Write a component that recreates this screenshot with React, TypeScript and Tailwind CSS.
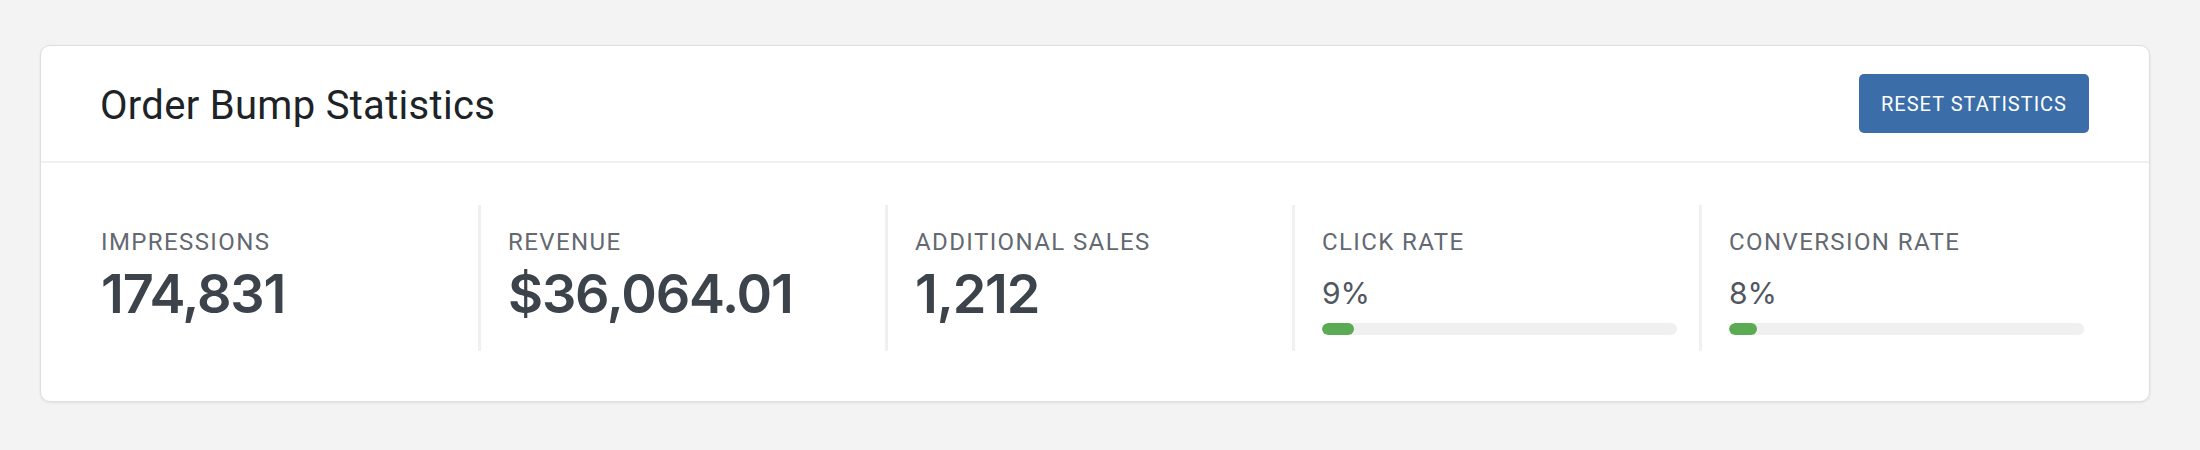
const stats = [
    { label: "IMPRESSIONS", value: "174,831" },
    { label: "REVENUE", value: "$36,064.01" },
    { label: "ADDITIONAL SALES", value: "1,212" },
    { label: "CLICK RATE", rate: 9 },
    { label: "CONVERSION RATE", rate: 8 },
];

function StatColumn({ stat, first }: { stat: any; first: boolean }) {
    return (
        <div
            className={`w-[407px] h-[146px] pt-[23px] pr-[22px] border-l-[3px] pl-[27px] ${
                first ? "border-transparent" : "border-[#f0f0f0]"
            }`}
        >
            <div className="text-[24px] leading-[28px] tracking-[1.4px] text-[#646970]">{stat.label}</div>
            {stat.rate === undefined ? (
                <div className="mt-[11px] font-['Inter',sans-serif] text-[54px] leading-none font-semibold tracking-[-1.2px] text-[#3c434a]">
                    {stat.value}
                </div>
            ) : (
                <>
                    <div className="mt-[22px] font-['Inter',sans-serif] text-[30px] leading-none text-[#50575e]">
                        {stat.rate}%
                    </div>
                    <div className="mt-[15px] h-[12px] w-full rounded-full bg-[#f0f0f0] overflow-hidden">
                        <div className="h-full rounded-full bg-[#5bab55]" style={{ width: `${stat.rate}%` }}></div>
                    </div>
                </>
            )}
        </div>
    );
}

export default function App() {
    return (
        <div className="min-h-[450px] bg-[#f3f3f3] pt-[45px] pl-[40px] font-['Roboto','Liberation_Sans',sans-serif]">
            <div className="w-[2110px] bg-white border border-[#dedede] rounded-[10px] shadow-[0_1px_3px_rgba(0,0,0,0.08)]">
                {/* Header */}
                <div className="h-[117px] flex items-center justify-between pl-[59px] pr-[60px] border-b-2 border-[#f0f0f1]">
                    <h1 className="mt-[4px] text-[40px] leading-none tracking-[0.3px] text-[#1d2327]">Order Bump Statistics</h1>
                    <button className="w-[230px] h-[59px] rounded-[5px] bg-[#3b6ea9] text-white text-[20px] tracking-[1px]">
                        RESET STATISTICS
                    </button>
                </div>
                {/* Stats */}
                <div className="flex pl-[30px] pt-[42px] pb-[50px]">
                    {stats.map((s, i) => (
                        <StatColumn key={s.label} stat={s} first={i === 0} />
                    ))}
                </div>
            </div>
        </div>
    );
}
